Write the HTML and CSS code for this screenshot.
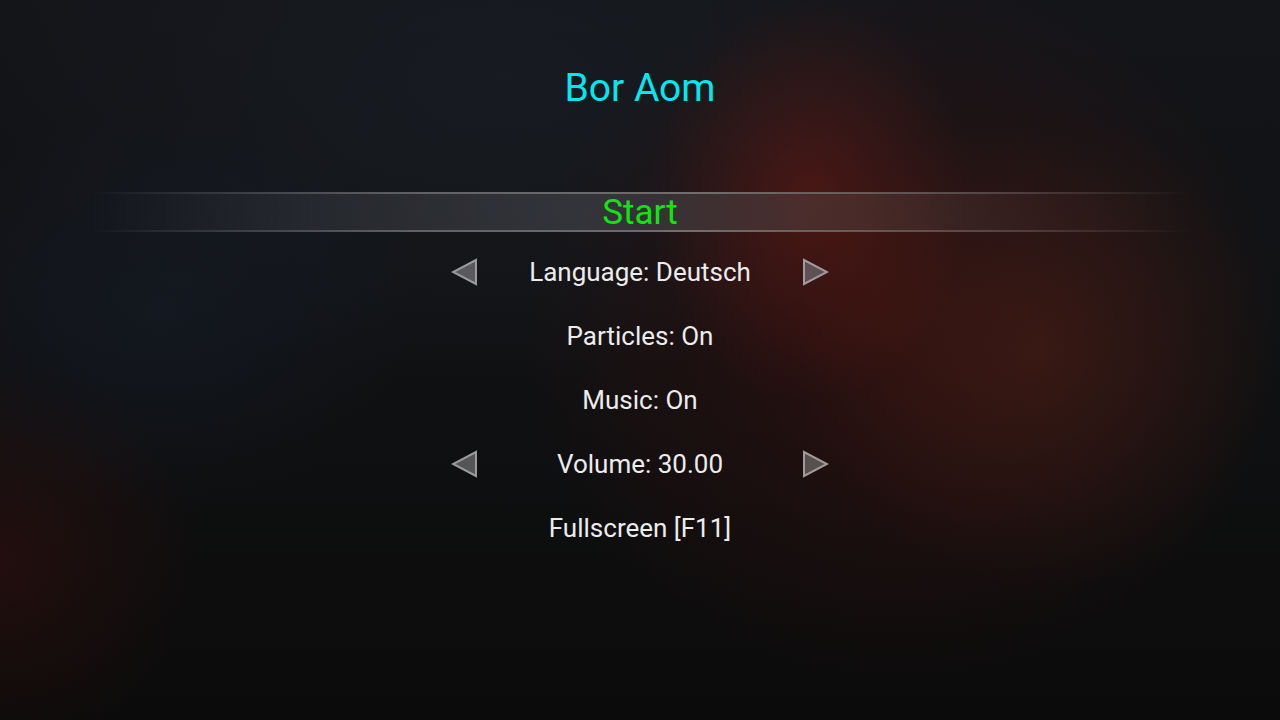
FILE: index.html
```html
<!DOCTYPE html>
<html>
<head>
<meta charset="utf-8">
<link rel="stylesheet" href="styles.css">
</head>
<body>
<div class="screen">
  <h1 class="title">Bor Aom</h1>
  <div class="menu">
    <div class="item selected"><span class="label start">Start</span></div>
    <div class="item">
      <svg class="arrow" width="28" height="28" viewBox="0 0 28 28"><polygon points="25,2 25,26 2,14" fill="#5a5a5e" stroke="#9a9a9e" stroke-width="2"/></svg>
      <span class="label wide">Language: Deutsch</span>
      <svg class="arrow" width="28" height="28" viewBox="0 0 28 28"><polygon points="3,2 3,26 26,14" fill="#5e5054" stroke="#a09a9c" stroke-width="2"/></svg>
    </div>
    <div class="item"><span class="label">Particles: On</span></div>
    <div class="item"><span class="label">Music: On</span></div>
    <div class="item">
      <svg class="arrow" width="28" height="28" viewBox="0 0 28 28"><polygon points="25,2 25,26 2,14" fill="#555558" stroke="#9a9a9e" stroke-width="2"/></svg>
      <span class="label wide">Volume: 30.00</span>
      <svg class="arrow" width="28" height="28" viewBox="0 0 28 28"><polygon points="3,2 3,26 26,14" fill="#57504f" stroke="#a09a9c" stroke-width="2"/></svg>
    </div>
    <div class="item"><span class="label">Fullscreen [F11]</span></div>
  </div>
</div>
</body>
</html>
```
FILE: styles.css
```css
html, body {
  margin: 0;
  padding: 0;
  background: #0b0b0b;
}
.screen {
  width: 1280px;
  height: 720px;
  overflow: hidden;
  position: relative;
  font-family: Roboto, "Liberation Sans", sans-serif;
  background:
    radial-gradient(ellipse 160px 200px at 810px 200px, rgba(130,30,20,0.4), rgba(130,30,20,0) 100%),
    radial-gradient(ellipse 240px 240px at 1040px 350px, rgba(100,40,25,0.35), rgba(100,40,25,0) 100%),
    radial-gradient(ellipse 380px 360px at 900px 330px, rgba(70,15,12,0.5), rgba(70,15,12,0) 100%),
    radial-gradient(ellipse 260px 200px at 160px 310px, rgba(25,35,55,0.35), rgba(25,35,55,0) 100%),
    radial-gradient(ellipse 200px 200px at 0px 560px, rgba(60,15,12,0.45), rgba(60,15,12,0) 100%),
    radial-gradient(ellipse 500px 300px at 500px 80px, rgba(24,28,34,0.9), rgba(24,28,34,0) 100%),
    linear-gradient(180deg, #141519 0%, #111214 40%, #0b0b0b 100%);
  display: flex;
  flex-direction: column;
  align-items: center;
}
.title {
  margin: 62px 0 0 0;
  height: 52px;
  font-weight: 400;
  font-size: 39px;
  line-height: 52px;
  color: #00e8ee;
}
.menu {
  margin-top: 78px;
  width: 1280px;
  display: flex;
  flex-direction: column;
  gap: 24px;
}
.item {
  height: 40px;
  display: flex;
  align-items: center;
  justify-content: center;
  gap: 46px;
}
.selected {
  margin: 0 90px -4px 90px;
  box-sizing: border-box;
  border-top: 2px solid;
  border-bottom: 2px solid;
  border-image: linear-gradient(90deg, rgba(120,120,125,0), rgba(110,110,115,0.8) 30%, rgba(120,115,115,0.9) 55%, rgba(110,100,100,0.6) 80%, rgba(110,100,100,0)) 1;
  background: linear-gradient(90deg, rgba(70,72,78,0) 0%, rgba(70,72,78,0.35) 20%, rgba(70,72,78,0.6) 45%, rgba(80,60,58,0.55) 70%, rgba(60,40,38,0.3) 88%, rgba(60,40,38,0) 100%);
}
.label {
  font-size: 26px;
  color: #ececec;
  white-space: nowrap;
}
.wide {
  min-width: 230px;
  text-align: center;
}
.start {
  color: #0ee60e;
  font-size: 35px;
}
.arrow {
  display: block;
}
```
